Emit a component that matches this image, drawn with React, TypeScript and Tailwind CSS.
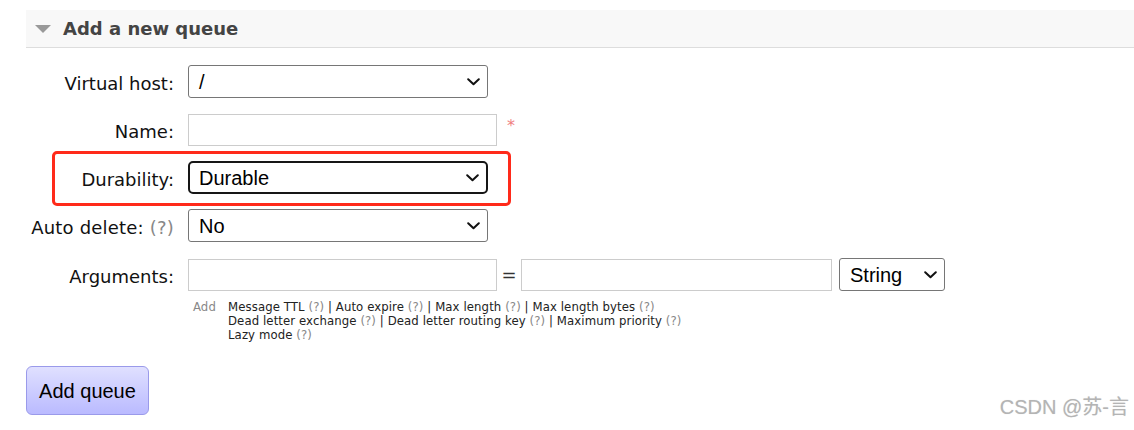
import React from "react";

const Chevron = () => (
  <svg width="13" height="8" viewBox="0 0 13 8" className="absolute right-[7px] top-1/2 -translate-y-1/2 pointer-events-none">
    <path d="M1.2 1.2 L6.5 6.3 L11.8 1.2" fill="none" stroke="#111" strokeWidth="2" strokeLinecap="round" strokeLinejoin="round" />
  </svg>
);

const Select = ({ value, w, focus }: { value: string; w: string; focus?: boolean }) => (
  <div
    className={`relative h-[33px] ${w} bg-white ${
      focus ? "border-2 border-[#161616] rounded-[5px]" : "border border-[#767676] rounded-[3px]"
    } flex items-center`}
  >
    <span className={`${focus ? "pl-[9px]" : "pl-[10px]"} text-[20px] text-black leading-none`} style={{ fontFamily: '"Liberation Sans", Arial, sans-serif' }}>
      {value}
    </span>
    <Chevron />
  </div>
);

const Input = ({ w }: { w: string }) => <div className={`h-[32px] ${w} bg-white border border-[#cccccc]`} />;

const Q = () => <span className="text-[#888]">(?)</span>;

export default function App() {
  const labelCls = "w-[148px] text-right text-[18px] text-[#111] shrink-0 whitespace-nowrap pt-[3px]";
  return (
    <div
      className="relative w-[1134px] h-[430px] bg-white overflow-hidden pt-[10px]"
      style={{ fontFamily: '"DejaVu Sans", Verdana, sans-serif' }}
    >
      <div className="ml-[26px] h-[38px] bg-[#f8f8f8] border-b border-[#dddddd] flex items-center">
        <svg width="16" height="9" viewBox="0 0 16 9" className="ml-[9px] mt-[1px]">
          <path d="M0 0 L16 0 L8 8 Z" fill="#999" />
        </svg>
        <span className="ml-[12px] text-[18px] font-bold text-[#444]">Add a new queue</span>
      </div>

      <div className="ml-[26px] mt-[17px] flex flex-col gap-[15px]">
        <div className="flex items-center gap-[14px] h-[33px]">
          <div className={labelCls}>Virtual host:</div>
          <Select value="/" w="w-[300px]" />
        </div>
        <div className="flex items-center gap-[14px] h-[33px]">
          <div className={labelCls}>Name:</div>
          <Input w="w-[309px]" />
          <span className="text-[#f08080] text-[16px] -mt-[8px] -ml-[4px]">*</span>
        </div>
        <div className="flex items-center gap-[14px] h-[33px]">
          <div className={labelCls}>Durability:</div>
          <Select value="Durable" w="w-[300px]" focus />
        </div>
        <div className="flex items-center gap-[14px] h-[33px]">
          <div className={`${labelCls} tracking-[0.2px]`}>
            Auto delete: <Q />
          </div>
          <Select value="No" w="w-[300px]" />
        </div>
        <div className="flex items-center gap-[14px] h-[33px] mt-[1px]">
          <div className={labelCls}>Arguments:</div>
          <div className="flex items-center">
            <Input w="w-[309px]" />
            <span className="w-[24px] text-center text-[18px] text-[#333]">=</span>
            <Input w="w-[311px]" />
            <div className="ml-[7px]">
              <Select value="String" w="w-[106px]" />
            </div>
          </div>
        </div>
      </div>

      <div
        className="ml-[193px] mt-[9px] flex text-[13px] leading-[14px] text-[#222] tracking-[0.1px]"
        style={{ fontFamily: '"DejaVu Sans Condensed", "DejaVu Sans", sans-serif', fontStretch: "condensed" }}
      >
        <span className="w-[35px] text-[#888]">Add</span>
        <div className="flex flex-col">
          <div>
            Message TTL <Q /> | Auto expire <Q /> | Max length <Q /> | Max length bytes <Q />
          </div>
          <div>
            Dead letter exchange <Q /> | Dead letter routing key <Q /> | Maximum priority <Q />
          </div>
          <div>
            Lazy mode <Q />
          </div>
        </div>
      </div>

      <button
        className="ml-[26px] mt-[24px] w-[123px] h-[49px] rounded-[6px] border border-[#9a9aea] bg-gradient-to-b from-[#e0e0ff] to-[#babaff] text-[20px] text-black"
        style={{ fontFamily: '"Liberation Sans", Arial, sans-serif' }}
      >
        Add queue
      </button>

      <div className="absolute left-[52px] top-[151px] w-[459px] h-[55px] border-[3px] border-[#ff2a1a] rounded-[5px] pointer-events-none" />

      <div
        className="absolute right-[5px] bottom-[8px] text-[20px] text-[#b4b4b4]"
        style={{ fontFamily: '"Liberation Sans", "Noto Sans CJK SC", sans-serif', textShadow: "0 0 1px #ddd" }}
      >
        CSDN @苏-言
      </div>
    </div>
  );
}
